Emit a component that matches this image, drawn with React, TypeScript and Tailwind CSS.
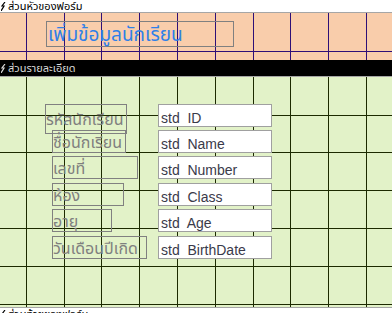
const THAI = "font-['Tahoma','Noto_Sans_Thai','Noto_Sans','DejaVu_Sans',sans-serif]"

const vLines = [26, 64, 101, 139, 177, 215, 253, 290, 328, 366]

type Field = { label: string; field: string; top: number; lw: number; lh?: number; lx?: number }

// control positions on the design canvas (detail section)
const fields: Field[] = [
  { label: 'รหัสนักเรียน', field: 'std  ID', top: 27, lw: 82, lh: 30, lx: 45 },
  { label: 'ชื่อนักเรียน', field: 'std  Name', top: 53, lw: 74 },
  { label: 'เลขที่', field: 'std  Number', top: 79, lw: 86 },
  { label: 'ห้อง', field: 'std  Class', top: 106, lw: 72 },
  { label: 'อายุ', field: 'std  Age', top: 132, lw: 60 },
  { label: 'วันเดือนปีเกิด', field: 'std  BirthDate', top: 159, lw: 95 },
]

function Bolt({ color }: { color: string }) {
  return (
    <svg width="5" height="9" viewBox="0 0 5 9" className="shrink-0">
      <path d="M4 0 L1 4 L3 4 L0 9" fill="none" stroke={color} strokeWidth="1.2" />
    </svg>
  )
}

function SectionBar({ text, dark }: { text: string; dark?: boolean }) {
  return (
    <div
      className={
        dark
          ? `flex h-[16px] items-center gap-[2px] bg-black pl-[1px] text-[11px] leading-none text-[#d9d9d9] ${THAI}`
          : `flex h-[12px] items-center gap-[2px] bg-white pl-[1px] text-[11px] leading-none text-black ${THAI}`
      }
    >
      <Bolt color={dark ? '#d9d9d9' : '#000'} />
      <span>{text}</span>
    </div>
  )
}

function GridLines({ color, rows }: { color: string; rows: number[] }) {
  return (
    <>
      {vLines.map((x) => (
        <div key={'v' + x} className="absolute top-0 bottom-0 w-px" style={{ left: x, background: color }} />
      ))}
      {rows.map((y) => (
        <div key={'h' + y} className="absolute left-0 right-0 h-px" style={{ top: y, background: color }} />
      ))}
    </>
  )
}

export default function App() {
  return (
    <div className="h-[313px] w-[392px] overflow-hidden bg-white">
      <SectionBar text="ส่วนหัวของฟอร์ม" />
      <div className="h-px bg-[#a6a6a6]" />

      {/* form header */}
      <div className="relative h-[47px] bg-[#f9cdab]">
        <GridLines color="#2e0f77" rows={[38]} />
        <div
          className={`absolute left-[46px] top-[8px] flex h-[26px] w-[188px] items-start border border-[#808080] pl-[1px] pt-[4px] text-[19px] leading-none text-[#2f80e8] ${THAI}`}
        >
          <span>เพิ่มข้อมูลนักเรียน</span>
        </div>
      </div>

      <SectionBar text="ส่วนรายละเอียด" dark />
      <div className="h-px bg-[#a6a6a6]" />

      {/* detail */}
      <div className="relative h-[230px] bg-[#e2f2c8]">
        <GridLines color="#1c2a00" rows={[38, 75, 113, 151, 189, 227]} />
        {fields.map((f) => (
          <div key={f.field}>
            <div
              className={`absolute flex items-center border border-[#808080] pt-[2px] text-[16px] leading-none text-[#7f7f7f] ${THAI}`}
              style={{ left: f.lx ?? 52, top: f.top, width: f.lw, height: f.lh ?? 23 }}
            >
              <span>{f.label}</span>
            </div>
            <div
              className="absolute left-[158px] flex h-[23px] w-[114px] items-end border border-[#a0a0a0] bg-white pl-[2px] font-['Liberation_Sans',sans-serif] text-[14px] leading-none text-[#3a3a4a]"
              style={{ top: f.top }}
            >
              <span className="whitespace-pre pb-[1px]">{f.field}</span>
            </div>
          </div>
        ))}
      </div>

      <div className="h-px bg-[#a6a6a6]" />
      <SectionBar text="ส่วนท้ายของฟอร์ม" />
    </div>
  )
}
